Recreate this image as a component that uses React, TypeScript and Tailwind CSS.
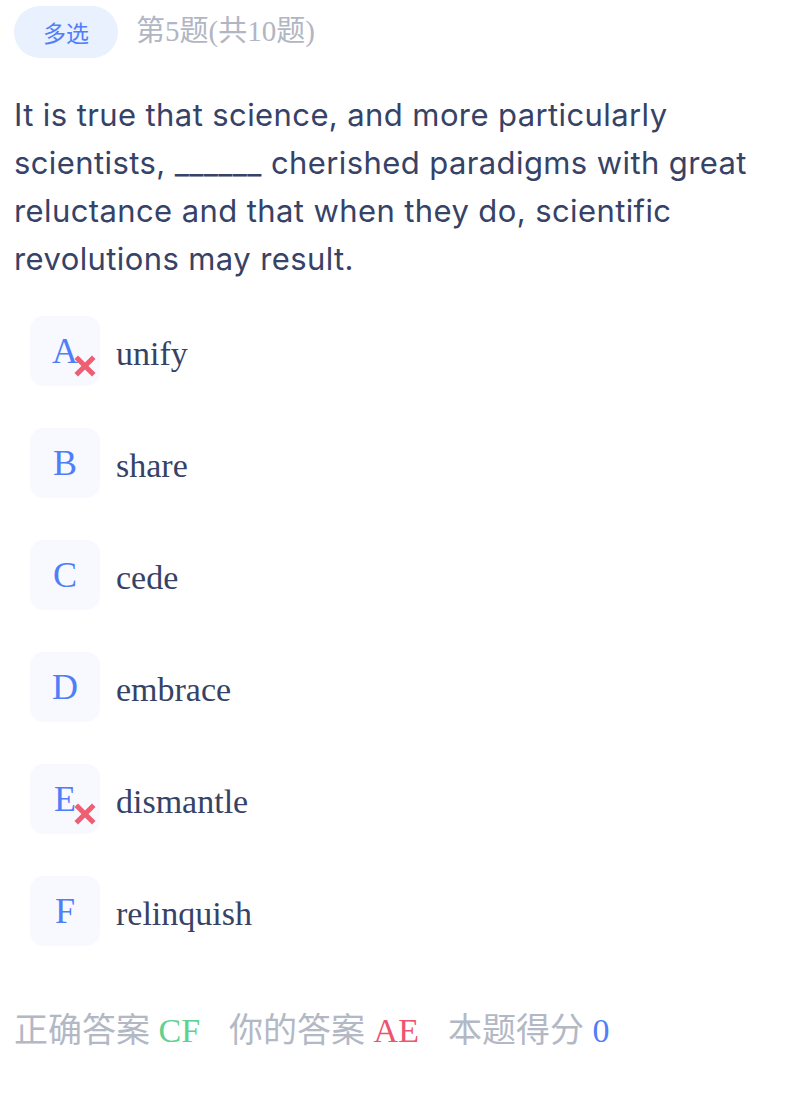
import React from 'react';

const serif = { fontFamily: '"Liberation Serif", "Noto Sans CJK SC", serif' };

const options = [
  { key: 'A', text: 'unify', wrong: true },
  { key: 'B', text: 'share', wrong: false },
  { key: 'C', text: 'cede', wrong: false },
  { key: 'D', text: 'embrace', wrong: false },
  { key: 'E', text: 'dismantle', wrong: true },
  { key: 'F', text: 'relinquish', wrong: false },
];

const WrongMark = () => (
  <svg width="22" height="22" viewBox="0 0 22 22" className="absolute left-[44px] top-[39px]">
    <path d="M4 4 L18 18 M18 4 L4 18" stroke="#ee5f73" strokeWidth="5" strokeLinecap="square" />
  </svg>
);

export default function App() {
  return (
    <div className="w-[812px] min-h-[1094px] bg-white px-[14px] pt-[6px]">
      {/* header */}
      <div className="flex items-center gap-[18px]">
        <span
          className="flex h-[52px] w-[104px] items-center justify-center rounded-full bg-[#e9f0fe] text-[23px] text-[#4f7ef8]"
          style={{ fontFamily: '"Noto Sans CJK SC", sans-serif' }}
        >
          多选
        </span>
        <span className="text-[29px] text-[#b1b6c4]" style={serif}>
          第5题(共10题)
        </span>
      </div>

      {/* question */}
      <p
        className="mt-[33px] text-[31px] leading-[48px] tracking-[0.4px] text-[#364266]"
        style={{ fontFamily: 'Inter, "Liberation Sans", sans-serif' }}
      >
        It is true that science, and more particularly scientists, ______ cherished paradigms with great
        reluctance and that when they do, scientific revolutions may result.
      </p>

      {/* options */}
      <div className="mt-[33px] flex flex-col gap-[42px] pl-4">
        {options.map((o) => (
          <div key={o.key} className="flex items-center gap-4">
            <div className="relative flex h-[70px] w-[70px] items-center justify-center rounded-[14px] bg-[#f7f9fe]">
              <span className="text-[36px] leading-none text-[#4f7ef8]" style={serif}>
                {o.key}
              </span>
              {o.wrong && <WrongMark />}
            </div>
            <span className="pt-1 text-[34px] text-[#364266]" style={serif}>
              {o.text}
            </span>
          </div>
        ))}
      </div>

      {/* result */}
      <div className="mt-[61px] flex items-center gap-[29px] text-[34px] leading-[48px] text-[#b3b8c5]" style={serif}>
        <span>
          正确答案 <span className="text-[#5fd18f]">CF</span>
        </span>
        <span>
          你的答案 <span className="text-[#ee5470]">AE</span>
        </span>
        <span>
          本题得分 <span className="text-[#4f7ef8]">0</span>
        </span>
      </div>
    </div>
  );
}
